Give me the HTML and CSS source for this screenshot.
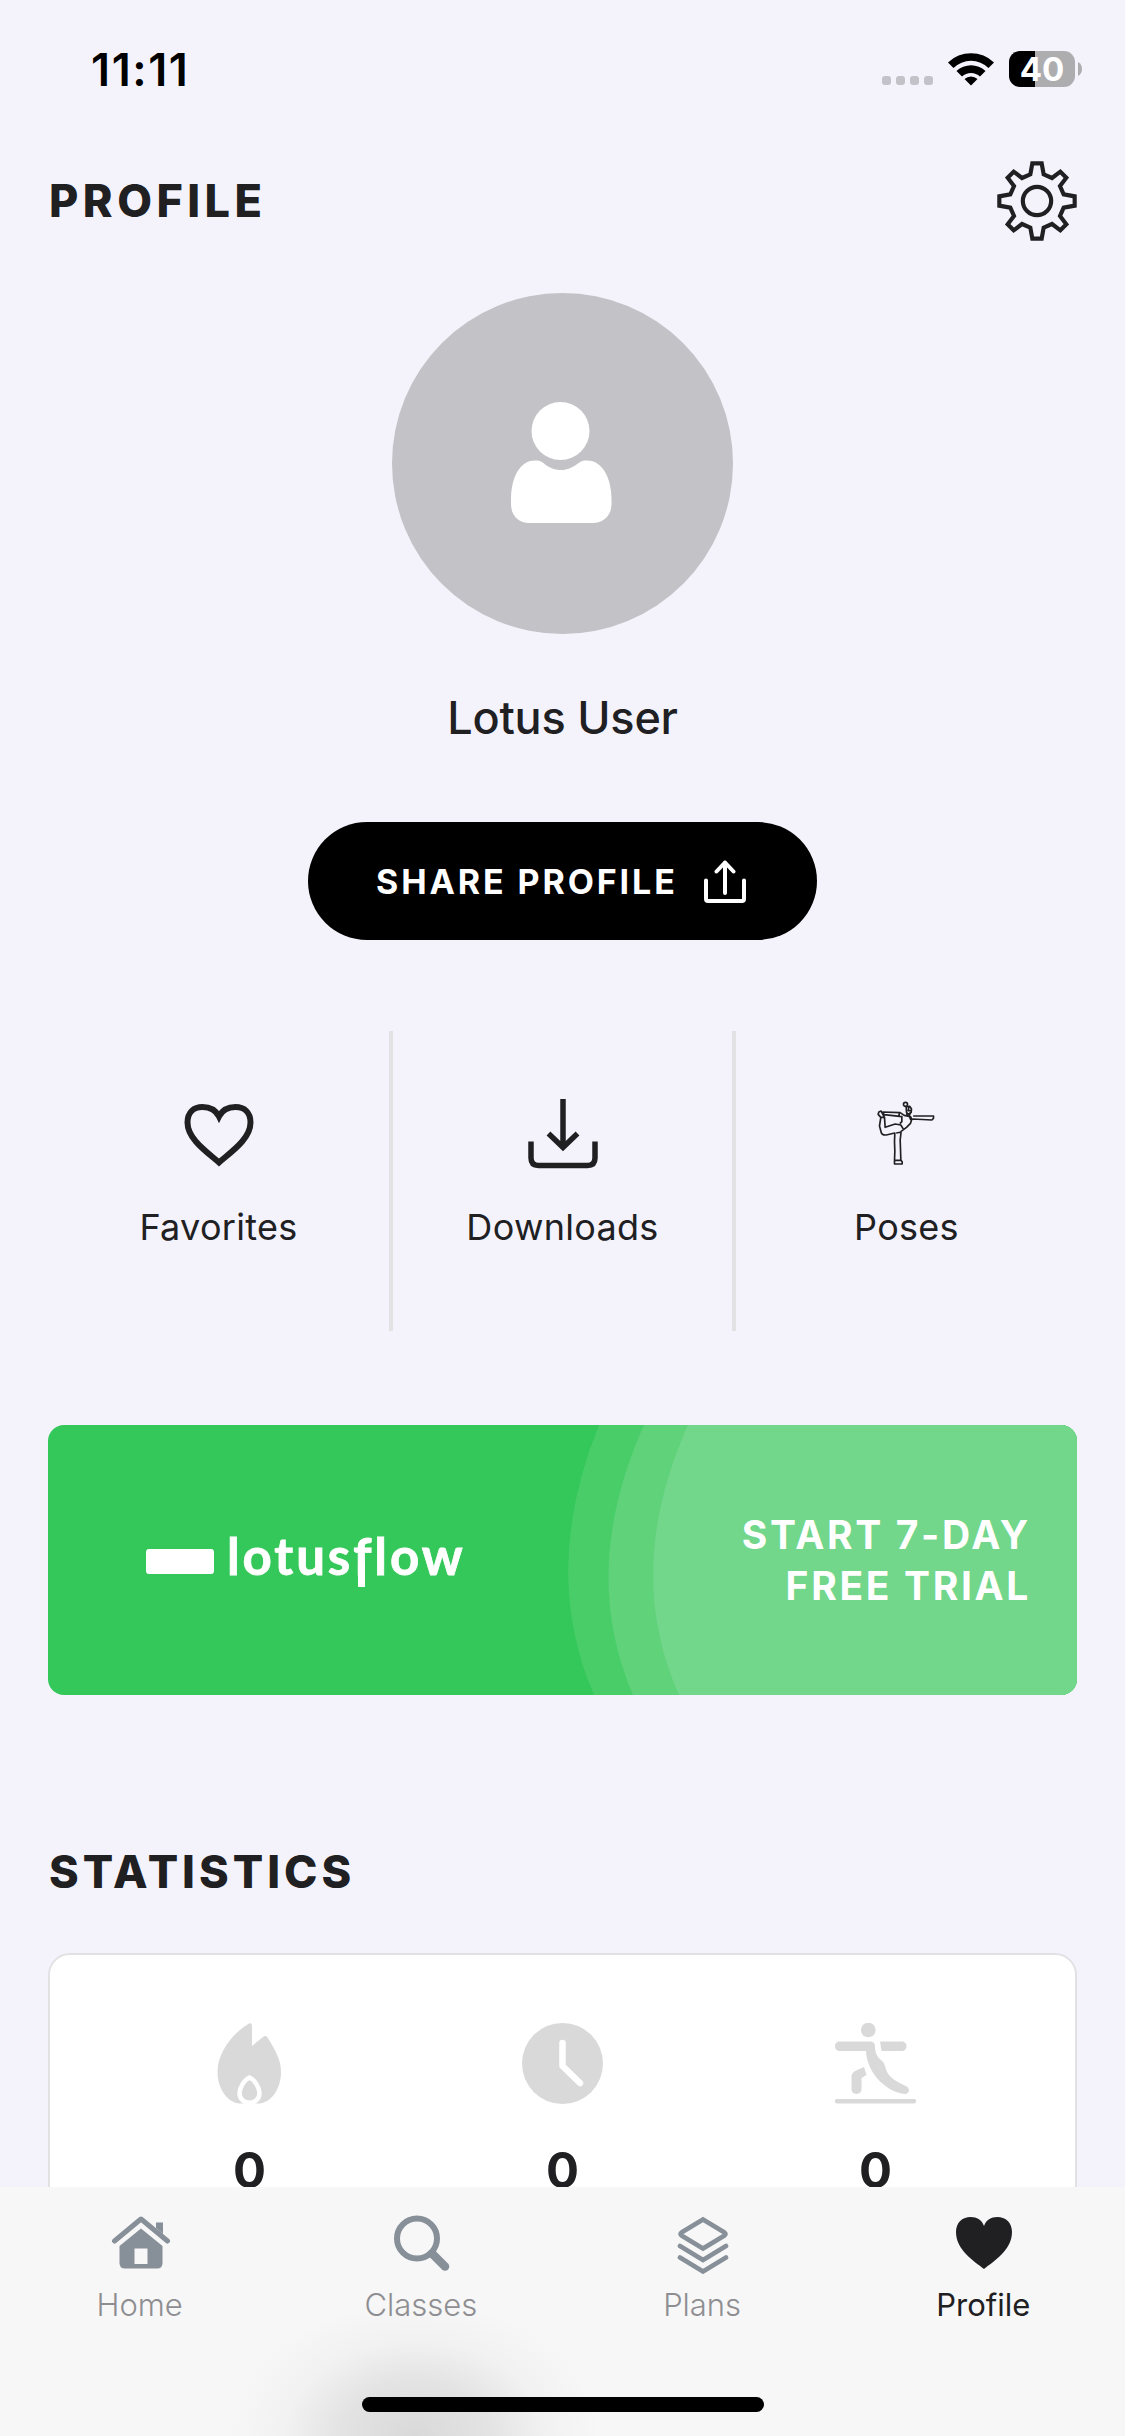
FILE: index.html
```
<!DOCTYPE html>
<html lang="en">
<head>
<meta charset="utf-8">
<title>Profile</title>
<link rel="stylesheet" href="styles.css">
</head>
<body>
<div class="screen">
  <div class="status">
    <span class="time">11:11</span>
    <div class="status-icons">
      <div class="dots"><i></i><i></i><i></i><i></i></div>
      <svg class="wifi" viewBox="0 0 46 34"><path d="M0 10.500A33 33 0 0 1 46 10.500L40.500 16A25 25 0 0 0 5.500 16ZM8.500 19A21 21 0 0 1 37.500 19L32 24.500A13 13 0 0 0 14 24.500ZM16.500 27A9.500 9.500 0 0 1 29.500 27L23 33.500Z"/></svg>
      <div class="battery">40</div>
      <svg class="nub" viewBox="0 0 4 14"><path d="M0 0Q4 2 4 7T0 14Z"/></svg>
    </div>
  </div>

  <header class="header">
    <h1 class="title">PROFILE</h1>
    <svg class="gear" viewBox="-120 -120 240 240"><path d="M-14-113H14L20-80 45-69 70-88 88-70 69-45 80-20 113-14V14L80 20 69 45 88 70 70 88 45 69 20 80 14 113H-14L-20 80-45 69-70 88-88 70-69 45-80 20-113 14V-14L-80-20-69-45-88-70-70-88-45-69-20-80Z"/><circle r="42.500"/></svg>
  </header>

  <div class="avatar">
    <svg class="person" viewBox="0 0 101 121"><circle cx="49.500" cy="29" r="29"/><path d="M24 58.500C28 58.500 30 59 33 61.500C38 65.500 43 68 50 68C57 68 61 65.500 67 61.500C70 59 72 58.500 76 58.500C92 58.500 100.500 77 100.500 97V102C100.500 114 92 121 82 121H18C8 121 0 114 0 102V97C0 77 8 58.500 24 58.500Z"/></svg>
  </div>
  <div class="name">Lotus User</div>
  <button class="share"><span>SHARE PROFILE</span>
    <svg viewBox="0 0 42 43"><path d="M2 20.500V39Q2 41 4 41H38Q40 41 40 39V20.500M21 33V2.500M12.500 11.500L21 2.500L29.500 11.500"/></svg>
  </button>

  <nav class="links">
    <div class="link"><svg viewBox="0 0 70 70"><path d="M35 63.500C23 53 3.500 40 3.500 23.500C3.500 13 10 8 18.500 8C26 8 32 11.500 35 17.500C38 11.500 44 8 51.500 8C60 8 66.500 13 66.500 23.500C66.500 40 47 53 35 63.500Z" stroke-width="6"/></svg><span>Favorites</span></div>
    <div class="link"><svg viewBox="0 0 70 70"><path d="M35 0V49M20.500 34.500L35 48.500L49.500 34.500M3 42.500V59Q3 66.500 10.500 66.500H59.500Q67 66.500 67 59V42.500" stroke-width="5.500"/></svg><span>Downloads</span></div>
    <div class="link"><svg class="pose" viewBox="34.500 27 210 210"><path d="M66 66L119 68L131 76L150 80L154 88L150 100L138 112L122 124L119 150L120 176L121 210L125 215V222H102V212L103 184L102 155L103 129L77 135Q64 136 62 127L57 108L61 82L53 73L55 66L62 63L67 73L72 82L74 112L104 102L121 105L129 118M61 82H72M66 66L71 74L124 80V95L118 101M107 129L124 126M104 211H121M116 68V79M158 78H219V85L214 90L156 87M147 81L151 90M139 69L140 78M151 66L146 77"/><circle cx="135" cy="43" r="6"/><path d="M137 50L148 49L153 57L152 67L143 73L138 67ZM145 52L143 62L151 61"/></svg><span>Poses</span></div>
  </nav>

  <section class="banner">
    <svg class="arcs" viewBox="0 0 1029 270" preserveAspectRatio="none"><path fill="#49cd69" d="M551 0Q492 145 546 270H1029V0Z"/><path fill="#5fd27a" d="M596 0Q531 145 585 270H1029V0Z"/><path fill="#72d68b" d="M640 0Q575 145 631 270H1029V0Z"/></svg>
    <div class="brand"><i class="mark"></i><span class="wordmark">lotus<span class="tail">f</span>low</span></div>
    <div class="trial">START 7-DAY<br>FREE TRIAL</div>
  </section>

  <h2 class="title stats-title">STATISTICS</h2>
  <section class="card">
    <div class="stat"><svg viewBox="0 0 81 81"><path d="M40 0.500C42 0 43 1 43 3V23L54 14C56 12 58 13 59.500 16C68 30 72 38 72 49C72 66 62 80 50 80.500H31C19 80 8.500 66 8.500 49C8.500 29 24 10 40 0.500Z"/><path d="M40.500 54.500C46 57 50.500 65 50.500 70C50.500 83 30.500 83 30.500 70C30.500 65 35 57 40.500 54.500Z" stroke="#fff" stroke-width="4.500"/></svg><span>0</span></div>
    <div class="stat"><svg viewBox="0 0 81 81"><circle cx="40.500" cy="40.500" r="40.500"/><path d="M40.500 20V43L58 60" fill="none" stroke="#fff" stroke-width="6.500" stroke-linecap="round" stroke-linejoin="round"/></svg><span>0</span></div>
    <div class="stat"><svg viewBox="0 0 81 81"><circle cx="33.300" cy="7" r="7.300"/><path d="M4.500 18.500H35Q40 18.500 40 23.500C40 30 42 34 46 37C50 40 50 44 52 49C56 56 64 60 71 63C76 66 74 71 70 71C54 70 32 52 31 28H4.500C-1.500 28-1.500 18.500 4.500 18.500ZM45 18.500H67C73 18.500 73 28 67 28H46.500ZM29 44L31.500 52L26.500 55V66C26.500 72.500 16.500 72.500 16.500 66V54Q16.500 50 20 48ZM2 76H79C82 76 82 80.500 79 80.500H2C-1 80.500-1 76 2 76Z"/></svg><span>0</span></div>
  </section>

  <nav class="tabs">
    <div class="tab"><svg viewBox="0 0 60 60"><path d="M3.500 27L30 5L56.500 27" fill="none" stroke="#878f99" stroke-width="5" stroke-linecap="round" stroke-linejoin="round"/><path d="M45 8.500H52V20L45 14ZM30 14.500L51.500 32V49Q51.500 54.500 46 54.500H14Q8.500 54.500 8.500 49V32ZM23.500 34.500V50H36.500V34.500Z" fill-rule="evenodd"/></svg><span>Home</span></div>
    <div class="tab"><svg viewBox="0 0 60 60"><circle cx="25" cy="24.500" r="20" fill="none" stroke="#878f99" stroke-width="6"/><path d="M40 39.500L53 52.500" stroke="#878f99" stroke-width="8.500" stroke-linecap="round"/></svg><span>Classes</span></div>
    <div class="tab"><svg viewBox="0 0 60 60"><path d="M30 5.500L51.500 18.500Q53.500 20 51.500 21.500L30 34.500L8.500 21.500Q6.500 20 8.500 18.500ZM7 32L30 46L53 32M7 43.500L30 57.500L53 43.500" fill="none" stroke="#878f99" stroke-width="4.600" stroke-linecap="round"/></svg><span>Plans</span></div>
    <div class="tab active"><svg viewBox="0 0 60 60"><path d="M30 55C20 47 2 36 2 18C2 8 9 3 16.500 3C23 3 28 6 30 12C32 6 37 3 43.500 3C51 3 58 8 58 18C58 36 40 47 30 55Z"/></svg><span>Profile</span></div>
    <div class="home-bar"></div>
  </nav>
</div>
</body>
</html>
```
FILE: styles.css
```
* { box-sizing: border-box; }
body { margin: 0; background: #f4f3fc; font-family: Inter, "Liberation Sans", sans-serif; color: #202022; }
.screen { position: relative; display: flex; flex-direction: column; width: 1125px; height: 2436px; overflow: hidden; }
.screen > * { flex: none; }
.status { display: flex; justify-content: space-between; align-items: center; height: 138px; padding: 0 43px 0 91px; color: #000; }
.time { font-size: 45px; font-weight: 600; letter-spacing: 1.600px; }
.status-icons { display: flex; align-items: center; height: 36px; }
.dots { display: flex; gap: 5px; align-self: flex-end; margin: 0 15px 2px 0; }
.dots i { width: 9px; height: 9px; border-radius: 3px; background: #c3c2c8; }
.wifi { width: 46px; height: 34px; margin-right: 15px; }
.battery { width: 66px; height: 36px; border-radius: 11px; background: linear-gradient(90deg, #000 26px, #adadb0 26px); color: #fff; font-size: 33px; font-weight: 700; line-height: 36px; text-align: center; }
.nub { width: 4px; height: 14px; margin-left: 3px; fill: #adadb0; }
.header { display: flex; justify-content: space-between; align-items: center; height: 126px; padding: 0 48px; }
.title { margin: 0; font-size: 45px; line-height: 60px; font-weight: 800; letter-spacing: 4.500px; padding-left: 1px; }
.gear { width: 80px; height: 80px; fill: none; stroke: #202022; stroke-width: 12.500; }
.avatar { display: flex; align-items: center; justify-content: center; align-self: center; width: 341px; height: 341px; margin-top: 29px; border-radius: 50%; background: #c3c2c7; }
.person { width: 101px; height: 121px; margin: -3px 3px 0 0; fill: #fff; }
.name { margin-top: 54px; font-size: 45px; line-height: 60px; font-weight: 500; letter-spacing: -0.200px; text-align: center; }
.share { display: flex; align-items: center; justify-content: space-between; align-self: center; width: 509px; height: 118px; margin-top: 74px; padding: 0 71px 0 68px; border: 0; border-radius: 59px; background: #000; color: #fff; font: 700 34px Inter, sans-serif; letter-spacing: 2.900px; }
.share svg { width: 42px; height: 43px; fill: none; stroke: #fff; stroke-width: 4; stroke-linecap: round; stroke-linejoin: round; }
.links { display: grid; grid-template-columns: 341px 347px 341px; height: 300px; margin: 91px 48px 0; }
.link { display: flex; flex-direction: column; align-items: center; padding-top: 68px; font-size: 36px; line-height: 48px; letter-spacing: 0.300px; }
.link:nth-child(2) { border: solid #e2e2e4; border-width: 0 4px; }
.link svg { width: 70px; height: 70px; margin-bottom: 34px; fill: none; stroke: #202022; }
.link .pose { stroke-width: 5; stroke-linejoin: round; }
.banner { position: relative; display: flex; justify-content: space-between; align-items: center; height: 270px; margin: 94px 48px 0; padding: 0 46px 0 98px; border-radius: 16px; overflow: hidden; background: #34c759; color: #fff; }
.arcs { position: absolute; inset: 0; width: 100%; height: 100%; }
.brand, .trial { position: relative; }
.brand { display: flex; align-items: center; margin-top: 3px; }
.mark { width: 68px; height: 25px; border-radius: 3px; background: #fff; margin-right: 13px; }
.wordmark { padding-bottom: 12px; font: 700 51px/60px Lato, sans-serif; letter-spacing: 2.900px; -webkit-text-stroke: 0.800px #fff; }
/* the brand's f has a stem that drops below the baseline */
.tail { position: relative; }
.tail::after { content: ""; position: absolute; left: 5px; top: 38px; width: 7px; height: 24px; background: #fff; }
.trial { font-size: 39px; font-weight: 700; line-height: 51.500px; letter-spacing: 2.650px; text-align: right; }
.stats-title { margin: 147px 48px 0; letter-spacing: 4px; }
.card { display: grid; grid-template-columns: repeat(3, 313px); justify-content: center; height: 560px; margin: 51px 48px 0; padding-top: 68px; border: 2px solid #e2e2e4; border-radius: 22px; background: #fff; }
.stat { display: flex; flex-direction: column; align-items: center; font-size: 49px; line-height: 60px; font-weight: 700; }
.stat svg { width: 81px; height: 81px; margin-bottom: 37px; fill: #d9d9d9; }
.tabs { position: absolute; left: 0; right: 0; bottom: 0; display: grid; grid-template-columns: repeat(4, 1fr); height: 249px; padding-top: 27px; background: radial-gradient(ellipse 185px 135px at 415px 249px, #d9d9d9, rgba(222,222,222,.8) 40%, rgba(236,236,236,.5) 70%, rgba(247,247,247,0)), #f7f7f7; }
.tab { display: flex; flex-direction: column; align-items: center; color: #8e8e92; font-size: 31px; line-height: 40px; font-weight: 300; }
.tab span { margin-right: 2px; }
.tab svg { width: 60px; height: 60px; margin-bottom: 11px; fill: #878f99; }
.tab.active { color: #202022; font-weight: 400; }
.tab.active svg { fill: #202022; }
.home-bar { position: absolute; left: 362px; bottom: 24px; width: 402px; height: 15px; border-radius: 8px; background: #000; }
```
